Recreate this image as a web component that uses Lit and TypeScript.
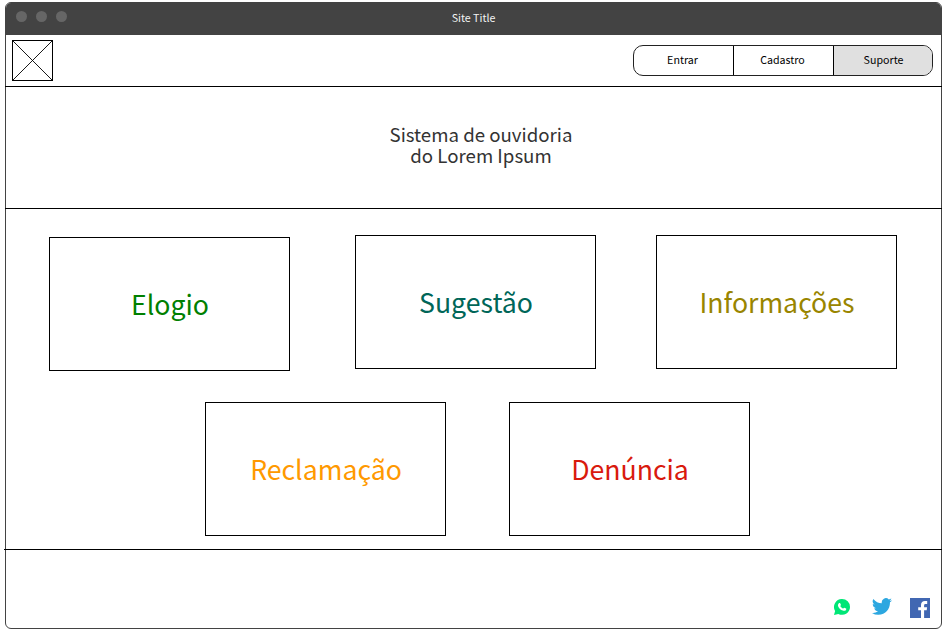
import { LitElement, html, css } from "lit";
import { customElement, property } from "lit/decorators.js";

@customElement("category-card")
class CategoryCard extends LitElement {
  @property() label = "";

  static styles = css`
    :host {
      box-sizing: border-box;
      display: flex;
      align-items: center;
      justify-content: center;
      width: 241px;
      height: 134px;
      padding-left: 1px;
      border: 1px solid #000;
      font-size: 20pt;
      line-height: 28px;
    }
  `;

  render() {
    return html`<span>${this.label}</span>`;
  }
}

@customElement("app-root")
class AppRoot extends LitElement {
  static styles = css`
    :host {
      display: block;
      box-sizing: border-box;
      height: 633px;
      padding: 2px 4px 4px 5px;
      background: #fff;
      font-family: "Noto Sans CJK SC", "Noto Sans", sans-serif;
      color: #000;
    }
    .window {
      box-sizing: border-box;
      display: flex;
      flex-direction: column;
      width: 937px;
      height: 627px;
      border: 1px solid #434343;
      border-radius: 6px;
    }
    .titlebar {
      display: grid;
      grid-template-columns: 1fr auto 1fr;
      align-items: center;
      height: 32px;
      flex: none;
      background: #434343;
      border-radius: 5px 5px 0 0;
      color: #f2f2f2;
      font-size: 8pt;
      line-height: 16px;
    }
    .dots {
      display: flex;
      gap: 9px;
      padding: 0 0 5px 10px;
    }
    .dot {
      width: 11px;
      height: 11px;
      border-radius: 50%;
      background: #666;
    }
    .title {
      padding-bottom: 2px;
    }
    .topbar,
    .hero,
    .categories {
      box-sizing: border-box;
      flex: none;
      border-bottom: 1px solid #000;
      margin: 0 -1px;
    }
    .topbar {
      display: flex;
      justify-content: space-between;
      align-items: flex-start;
      height: 52px;
      padding: 5px 9px 0 7px;
    }
    .logo {
      display: block;
      width: 41px;
      height: 41px;
    }
    .nav {
      box-sizing: border-box;
      display: flex;
      width: 300px;
      height: 31px;
      margin-top: 5px;
      border: 1px solid #222;
      border-radius: 10px;
      overflow: hidden;
      font-size: 8pt;
      line-height: 28px;
      text-align: center;
    }
    .tab {
      box-sizing: border-box;
      width: 100px;
      padding-right: 2px;
      border-right: 1px solid #000;
    }
    .tab:last-child {
      width: 98px;
      padding: 0 0 0 1px;
      border-right: 0;
      background: #e0e0e0;
    }
    .hero {
      display: flex;
      flex-direction: column;
      align-items: center;
      height: 122px;
      padding: 36px 0 0 15px;
      font-size: 14pt;
      line-height: 21px;
      color: #333;
    }
    .categories {
      height: 341px;
      padding-top: 26px;
      margin-left: -2px;
    }
    .row {
      display: flex;
      align-items: flex-start;
    }
    .first {
      height: 136px;
      padding-left: 45px;
    }
    .second {
      padding: 31px 0 0 201px;
      gap: 63px;
    }
    .praise {
      color: #008000;
      margin: 2px 65px 0 0;
    }
    .suggestion {
      color: #006658;
      margin-right: 60px;
    }
    .info {
      color: #998500;
    }
    .complaint {
      color: #ff9900;
    }
    .report {
      color: #d91a0d;
    }
    .footer {
      flex: 1;
      display: flex;
      justify-content: flex-end;
      align-items: flex-start;
      padding: 47px 11px 0 0;
    }
    .whatsapp {
      width: 16px;
      height: 16px;
      margin: 2px 22px 0 0;
    }
    .twitter {
      width: 20px;
      height: 17px;
      margin: 1px 18px 0 0;
    }
    .facebook {
      width: 20px;
      height: 20px;
      margin-top: 1px;
    }
  `;

  render() {
    return html`
      <div class="window">
        <header class="titlebar">
          <div class="dots">
            <span class="dot"></span><span class="dot"></span><span class="dot"></span>
          </div>
          <span class="title">Site Title</span>
          <span></span>
        </header>
        <div class="topbar">
          <svg class="logo" viewBox="0 0 41 41" fill="none" stroke="#000">
            <rect x=".5" y=".5" width="40" height="40" />
            <path d="M.5.5l40 40M40.5.5l-40 40" stroke-width=".9" />
          </svg>
          <nav class="nav">
            <span class="tab">Entrar</span>
            <span class="tab">Cadastro</span>
            <span class="tab">Suporte</span>
          </nav>
        </div>
        <section class="hero">
          <div>Sistema de ouvidoria</div>
          <div>do Lorem Ipsum</div>
        </section>
        <main class="categories">
          <div class="row first">
            <category-card class="praise" label="Elogio"></category-card>
            <category-card class="suggestion" label="Sugestão"></category-card>
            <category-card class="info" label="Informações"></category-card>
          </div>
          <div class="row second">
            <category-card class="complaint" label="Reclamação"></category-card>
            <category-card class="report" label="Denúncia"></category-card>
          </div>
        </main>
        <footer class="footer">
          <svg class="whatsapp" viewBox="0 0 16 16">
            <path fill="#00e676" d="M8.1 0A7.9 7.9 0 0 1 16 7.9a7.9 7.9 0 0 1-11.7 7L0 16l1.1-4.1A7.9 7.9 0 0 1 8.1 0z" />
            <path fill="#fff" d="M5.1 4.1c.3-.3.9-.3 1.1.1l.7 1.6c.1.3-.1.6-.6 1.2.7 1.3 1.6 2.1 2.9 2.6.6-.7.8-1 1.1-.9l1.8.9c.4.2.1 1.2-.3 1.6-.7.7-1.8.8-3 .4-2.200-.7-3.800-2.200-4.700-4.300-.4-1.200.1-2.400 1-3.200z" />
          </svg>
          <svg class="twitter" viewBox="0 2 24 20" preserveAspectRatio="none">
            <path fill="#2ca7e0" d="M23.950 4.570a10 10 0 0 1-2.820.770 4.960 4.960 0 0 0 2.160-2.720 9.900 9.900 0 0 1-3.120 1.190 4.920 4.920 0 0 0-8.380 4.480A13.900 13.900 0 0 1 1.640 3.160a4.920 4.920 0 0 0 1.520 6.570 4.900 4.900 0 0 1-2.230-.61v.06a4.920 4.920 0 0 0 3.950 4.830 5 5 0 0 1-2.210.08 4.940 4.940 0 0 0 4.600 3.420A9.870 9.870 0 0 1 0 19.540a13.900 13.900 0 0 0 7.550 2.210c9.050 0 14-7.500 14-13.980 0-.21 0-.42-.02-.63a9.900 9.900 0 0 0 2.420-2.570z" />
          </svg>
          <svg class="facebook" viewBox="0 0 20 20">
            <path fill="#4167b2" d="M0 0h20v20H0z" />
            <path fill="#fff" d="M11 20v-7.700H8.200V9.200H11V7c0-2.600 1.600-4 3.900-4 1.100 0 2.100.1 2.300.1v2.800h-1.600c-1.200 0-1.500.6-1.500 1.500v1.800h3l-.4 3.100h-2.600V20z" />
          </svg>
        </footer>
      </div>
    `;
  }
}
